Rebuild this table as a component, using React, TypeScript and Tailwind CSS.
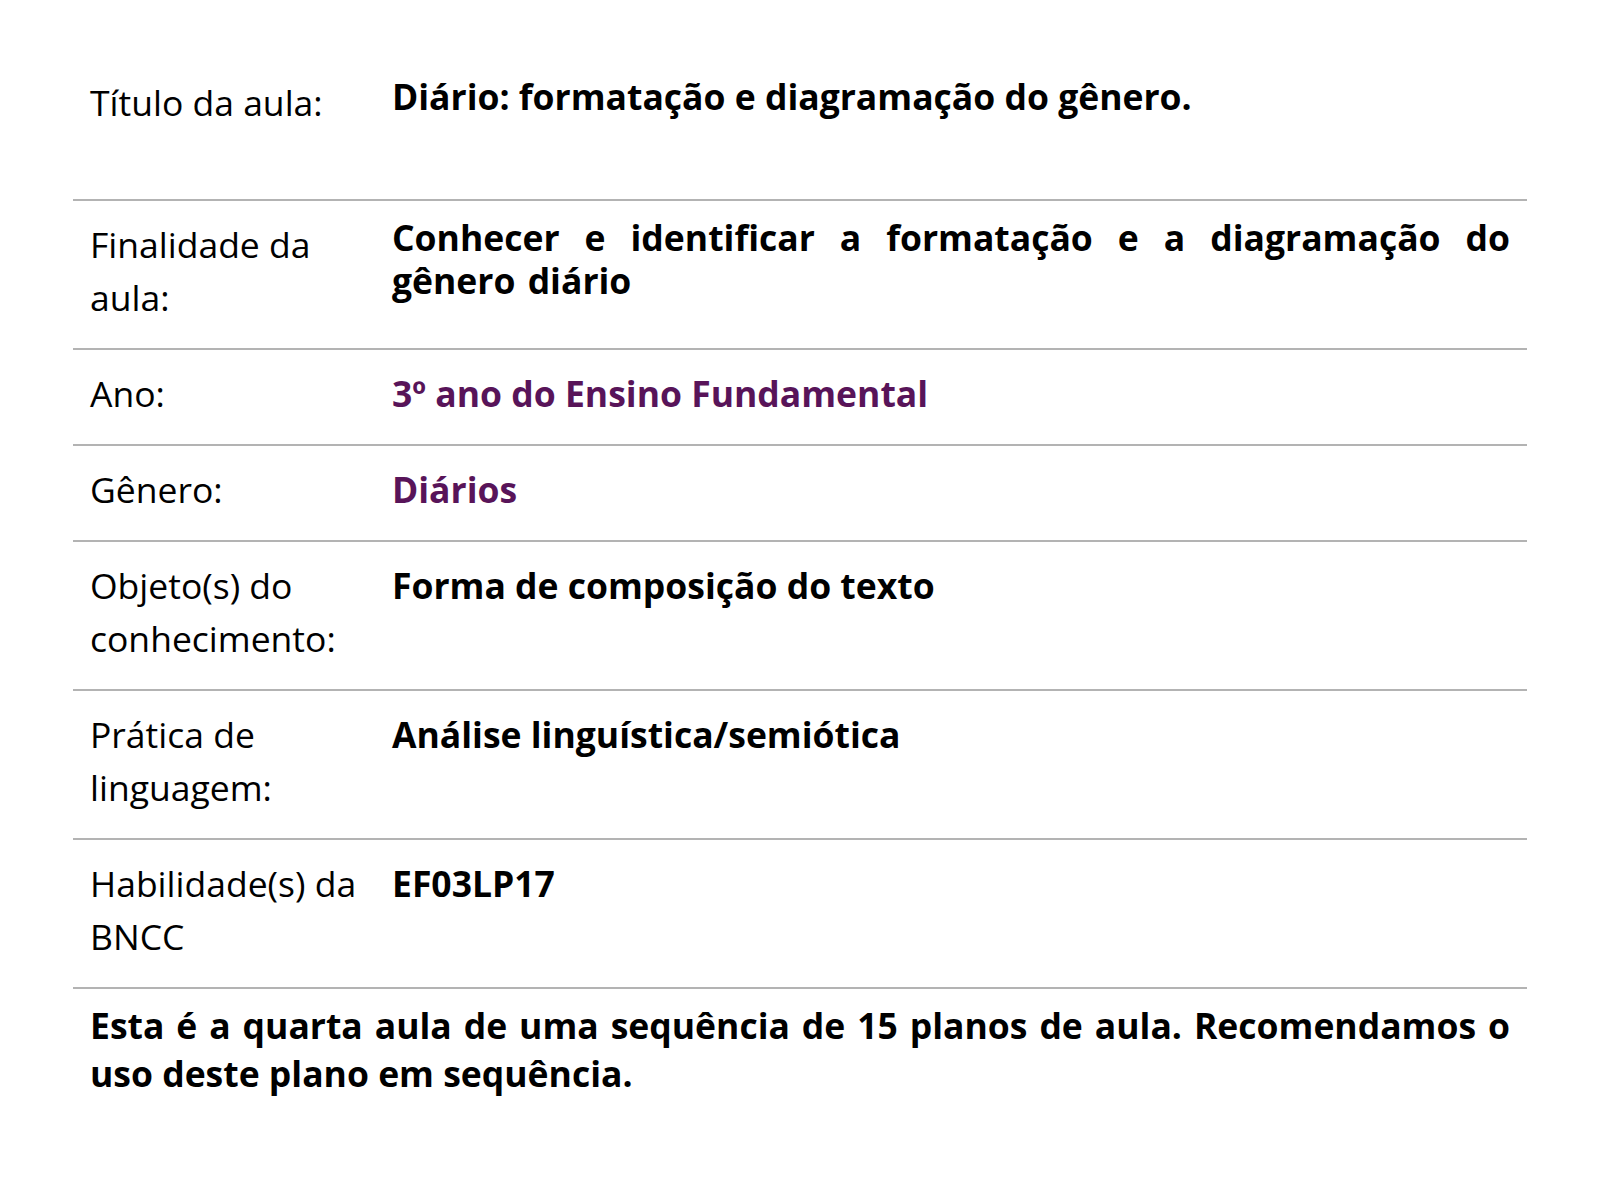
import React from "react";

const rows: { label: string; value: string; purple?: boolean; justify?: boolean }[] = [
  {
    label: "Finalidade da aula:",
    value: "Conhecer e identificar a formatação e a diagramação do gênero diário",
    justify: true,
  },
  { label: "Ano:", value: "3º ano do Ensino Fundamental", purple: true },
  { label: "Gênero:", value: "Diários", purple: true },
  { label: "Objeto(s) do conhecimento:", value: "Forma de composição do texto" },
  { label: "Prática de linguagem:", value: "Análise linguística/semiótica" },
  { label: "Habilidade(s) da BNCC", value: "EF03LP17" },
];

export default function App() {
  return (
    <div
      className="w-[1600px] h-[1200px] bg-white text-black"
      style={{ fontFamily: '"Open Sans", "Noto Sans", sans-serif' }}
    >
      <div className="ml-[73px] w-[1454px]">
        <div className="grid grid-cols-[302px_1fr] items-start h-[201px] border-b-2 border-[#b3b3b3]">
          <div className="pl-[17px] pt-[76px] text-[35.5px] leading-[53px]">Título da aula:</div>
          <div className="pl-[17px] pr-[17px] pt-[75px] text-[35.5px] leading-[43px] font-bold">
            Diário: formatação e diagramação do gênero.
          </div>
        </div>
        {rows.map((r) => (
          <div
            key={r.label}
            className="grid grid-cols-[302px_1fr] items-baseline border-b-2 border-[#b3b3b3] pt-[17px] pb-[24px]"
          >
            <div className="pl-[17px] pr-[8px] text-[35.5px] leading-[53px]">{r.label}</div>
            <div
              className={
                "pl-[17px] pr-[17px] text-[35.5px] leading-[43px] font-bold " +
                (r.purple ? "text-[#581459] " : "") +
                (r.justify ? "text-justify [word-spacing:3px] self-start -mt-[2px]" : "")
              }
            >
              {r.value}
            </div>
          </div>
        ))}
        <p className="px-[17px] pt-[12px] text-[35.5px] leading-[48px] font-bold text-justify">
          Esta é a quarta aula de uma sequência de 15 planos de aula. Recomendamos o uso deste plano em sequência.
        </p>
      </div>
    </div>
  );
}
